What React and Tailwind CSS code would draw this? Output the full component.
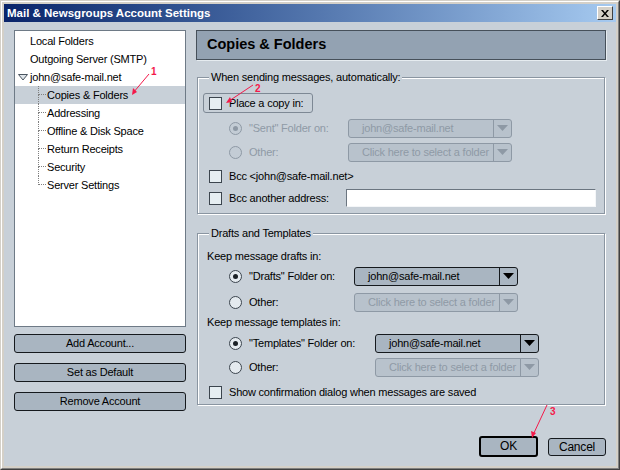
import React from "react";

const ui = "font-['Liberation_Sans',Arial,sans-serif] text-[11px] tracking-[-0.2px]";

function Checkbox() {
  return <span className="w-[13px] h-[13px] shrink-0 border border-[#3c454e] bg-[#e6eef2]" />;
}

function Radio({ checked, disabled }) {
  return (
    <span
      className={
        disabled
          ? "w-[13px] h-[13px] shrink-0 rounded-full border border-[#8e99a5] bg-[#c3ccd5] flex items-center justify-center"
          : "w-[13px] h-[13px] shrink-0 rounded-full border border-[#3c454e] bg-[#e4eaef] flex items-center justify-center"
      }
    >
      {checked && (
        <span className={disabled ? "w-[5px] h-[5px] rounded-full bg-[#8e99a5]" : "w-[5px] h-[5px] rounded-full bg-[#1a2026]"} />
      )}
    </span>
  );
}

function Select({ text, disabled }) {
  return (
    <div
      className={
        disabled
          ? "h-[19px] w-[164px] shrink-0 rounded-[3px] border border-[#8e99a5] bg-[#b8c2cc] text-[#8f9aa6] flex"
          : "h-[19px] w-[164px] shrink-0 rounded-[3px] border border-[#15191d] bg-[#a9b5c1] text-black flex"
      }
    >
      <span className="flex-1 pl-[13px] overflow-hidden whitespace-nowrap leading-[17px]">{text}</span>
      <span
        className={
          disabled
            ? "w-[18px] border-l border-[#8e99a5] flex items-center justify-center"
            : "w-[18px] border-l border-[#15191d] flex items-center justify-center"
        }
      >
        <svg width="11" height="6" viewBox="0 0 11 6">
          <path d="M0 0h11L5.5 6z" fill={disabled ? "#8e99a5" : "#000"} />
        </svg>
      </span>
    </div>
  );
}

function TreeChild({ label, selected, last }) {
  return (
    <div className={selected ? "h-[18px] flex items-stretch bg-[#c8d0d8]" : "h-[18px] flex items-stretch"}>
      <span className="ml-[23px] w-[8px] flex flex-col">
        <span className="h-[9px] border-l border-b border-dotted border-[#808080]" />
        {!last && <span className="flex-1 border-l border-dotted border-[#808080]" />}
      </span>
      <span className="ml-[1px] leading-[18px]">{label}</span>
    </div>
  );
}

function SideButton({ children, className }) {
  return (
    <button
      className={
        "h-[19px] w-full rounded-[3px] border border-[#15191d] bg-[#a9b5c1] text-black leading-[17px] text-center " +
        className
      }
    >
      {children}
    </button>
  );
}

export default function App() {
  return (
    <div className={"relative w-[620px] h-[470px] border border-t-[#d4d0c8] border-l-[#d4d0c8] border-r-[#404040] border-b-[#404040] " + ui}>
      <div className="h-full border border-t-white border-l-white border-r-[#808080] border-b-[#808080] bg-[#d4d0c8] p-[2px] flex flex-col">
        {/* title bar */}
        <div className="h-[18px] shrink-0 flex items-center bg-gradient-to-r from-[#0a246a] to-[#a6caf0] pl-[3px] pr-[3px]">
          <span className="flex-1 text-white font-bold text-[11.5px] tracking-normal leading-[18px]">
            Mail &amp; Newsgroups Account Settings
          </span>
          <span className="w-[16px] h-[14px] bg-[#d4d0c8] border border-t-white border-l-white border-r-[#404040] border-b-[#404040] flex items-center justify-center">
            <svg width="8" height="7" viewBox="0 0 8 7">
              <path d="M0 0h2l2 2.5L6 0h2L5 3.5 8 7H6L4 4.5 2 7H0l3-3.5z" fill="#000" />
            </svg>
          </span>
        </div>

        {/* body */}
        <div className="flex-1 bg-[#c8d0d8] flex gap-[10px] pt-[8px] pl-[10px] pr-[10px]">
          {/* left column */}
          <div className="w-[172px] flex flex-col">
            <div className="h-[297px] border border-[#6e7a86] bg-white pt-[1px] text-black">
              <div className="h-[18px] leading-[18px] pl-[15px]">Local Folders</div>
              <div className="h-[18px] leading-[18px] pl-[15px]">Outgoing Server (SMTP)</div>
              <div className="h-[18px] flex items-center pl-[3px] gap-[2px]">
                <svg width="10" height="7" viewBox="0 0 10 7">
                  <path d="M0.5 0.5h9L5 6z" fill="#dfe5ea" stroke="#4a5560" />
                </svg>
                <span className="leading-[18px]">john@safe-mail.net</span>
              </div>
              <TreeChild label="Copies & Folders" selected />
              <TreeChild label="Addressing" />
              <TreeChild label="Offline & Disk Space" />
              <TreeChild label="Return Receipts" />
              <TreeChild label="Security" />
              <TreeChild label="Server Settings" last />
            </div>
            <SideButton className="mt-[7px]">Add Account...</SideButton>
            <SideButton className="mt-[10px]">Set as Default</SideButton>
            <SideButton className="mt-[10px]">Remove Account</SideButton>
          </div>

          {/* right column */}
          <div className="w-[410px] flex flex-col text-black">
            <div className="h-[30px] shrink-0 border border-[#46505a] bg-[#93a2b2] shadow-[1px_1px_0_#e6ecf0] flex items-center pl-[10px]">
              <span className="font-bold text-[14.5px] tracking-normal">Copies &amp; Folders</span>
            </div>

            <fieldset className="mt-[11px] mx-[1px] border border-[#8a95a1] shadow-[inset_1px_1px_0_#fff,1px_1px_0_#fff] pb-[5px]">
              <legend className="ml-[11px] px-[2px] leading-[13px] bg-[#c8d0d8]">When sending messages, automatically:</legend>
              <div className="mt-[8px] h-[22px] flex items-center">
                <div className="ml-[5px] h-[20px] w-[110px] rounded-[3px] border border-[#7d8894] flex items-center pl-[5px] gap-[7px]">
                  <Checkbox />
                  <span>Place a copy in:</span>
                </div>
              </div>
              <div className="mt-[2px] h-[24px] flex items-center pl-[31px]">
                <Radio checked disabled />
                <span className="ml-[7px] w-[99px] text-[#8f9aa6]">"Sent" Folder on:</span>
                <Select text="john@safe-mail.net" disabled />
              </div>
              <div className="h-[24px] flex items-center pl-[31px]">
                <Radio disabled />
                <span className="ml-[7px] w-[99px] text-[#8f9aa6]">Other:</span>
                <Select text="Click here to select a folder" disabled />
              </div>
              <div className="h-[24px] flex items-center pl-[11px]">
                <Checkbox />
                <span className="ml-[7px]">Bcc &lt;john@safe-mail.net&gt;</span>
              </div>
              <div className="h-[20px] flex items-center pl-[11px]">
                <Checkbox />
                <span className="ml-[7px] w-[117px]">Bcc another address:</span>
                <span className="h-[18px] w-[250px] bg-white border border-[#6b7580] border-r-[#f4f6f8] border-b-[#f4f6f8]" />
              </div>
            </fieldset>

            <fieldset className="mt-[13px] mx-[1px] border border-[#8a95a1] shadow-[inset_1px_1px_0_#fff,1px_1px_0_#fff] pb-[2px]">
              <legend className="ml-[11px] px-[2px] leading-[13px] bg-[#c8d0d8]">Drafts and Templates</legend>
              <div className="mt-[8px] h-[16px] flex items-center pl-[9px]">Keep message drafts in:</div>
              <div className="h-[24px] flex items-center pl-[31px]">
                <Radio checked />
                <span className="ml-[7px] w-[105px]">"Drafts" Folder on:</span>
                <Select text="john@safe-mail.net" />
              </div>
              <div className="mt-[2px] h-[24px] flex items-center pl-[31px]">
                <Radio />
                <span className="ml-[7px] w-[105px]">Other:</span>
                <Select text="Click here to select a folder" disabled />
              </div>
              <div className="h-[16px] flex items-center pl-[9px]">Keep message templates in:</div>
              <div className="mt-[1px] h-[24px] flex items-center pl-[31px]">
                <Radio checked />
                <span className="ml-[7px] w-[126px]">"Templates" Folder on:</span>
                <Select text="john@safe-mail.net" />
              </div>
              <div className="h-[24px] flex items-center pl-[31px]">
                <Radio />
                <span className="ml-[7px] w-[126px]">Other:</span>
                <Select text="Click here to select a folder" disabled />
              </div>
              <div className="mt-[3px] h-[20px] flex items-center pl-[11px]">
                <Checkbox />
                <span className="ml-[7px]">Show confirmation dialog when messages are saved</span>
              </div>
            </fieldset>

            <div className="mt-auto pb-[9px] flex items-center justify-end gap-[10px]">
              <button className="h-[21px] w-[59px] rounded-[3px] border-2 border-black bg-[#a9b5c1] text-[12px] leading-[17px]">OK</button>
              <button className="h-[18px] w-[58px] rounded-[3px] border border-[#15191d] bg-[#a9b5c1] text-[12px] leading-[16px]">Cancel</button>
            </div>
          </div>
        </div>
      </div>

      {/* annotation arrows */}
      <svg className="absolute left-0 top-0 pointer-events-none" width="620" height="470" viewBox="0 0 620 470">
        <g stroke="#f4194a" strokeWidth="1" fill="#f4194a">
          <line x1="148" y1="73" x2="132" y2="92" />
          <path d="M131 94l1-7 4 4z" stroke="none" />
          <line x1="252" y1="84" x2="228" y2="100" />
          <path d="M225 102l4-6 2 5z" stroke="none" />
          <line x1="546" y1="404" x2="532" y2="434" />
          <path d="M531 437l-1-7 5 2z" stroke="none" />
        </g>
        <g fill="#f4194a" fontFamily="Liberation Sans, Arial, sans-serif" fontWeight="bold" fontSize="10">
          <text x="150" y="74">1</text>
          <text x="254" y="91">2</text>
          <text x="549" y="414">3</text>
        </g>
      </svg>
    </div>
  );
}
